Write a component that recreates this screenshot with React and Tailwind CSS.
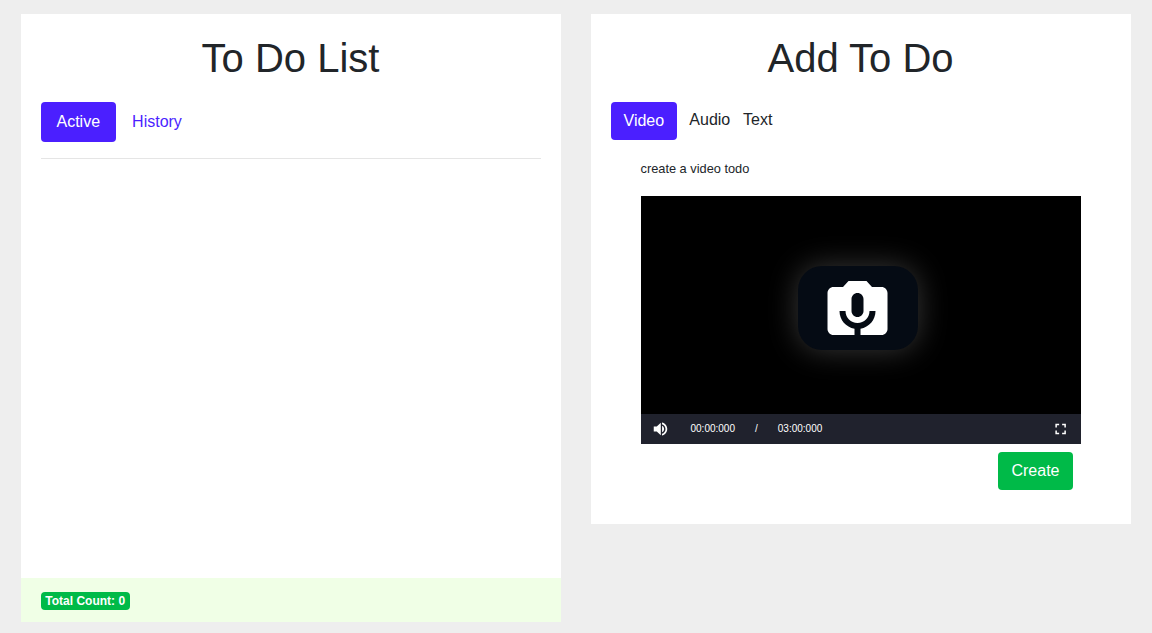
function CameraMicIcon({ className }) {
  return (
    <svg viewBox="-0.17 0 24 24" fill="currentColor" className={className}>
      <path d="M20 5h-3.17L15 3H9L7.17 5H4c-1.1 0-2 .9-2 2v12c0 1.1.9 2 2 2h7v-2.09c-2.83-.48-5-2.94-5-5.91h2c0 2.21 1.79 4 4 4s4-1.79 4-4h2c0 2.97-2.17 5.43-5 5.91V21h7c1.1 0 2-.9 2-2V7c0-1.1-.9-2-2-2zm-6 8c0 1.1-.9 2-2 2s-2-.9-2-2V9c0-1.1.9-2 2-2s2 .9 2 2v4z" />
    </svg>
  );
}

function VolumeIcon({ className }) {
  return (
    <svg viewBox="0.67 0 24 24" fill="currentColor" className={className}>
      <path d="M3 8.6v6.8h4l5.4 5V3.6L7 8.6H3zm13.8 3.4c0-1.9-1.1-3.6-2.7-4.4v8.8c1.6-.8 2.7-2.5 2.7-4.4zM14 3.23v2.3c2.7.86 4.7 3.4 4.7 6.47s-2 5.61-4.7 6.47v2.3c4.01-.91 7-4.49 7-8.77s-2.99-7.86-7-8.77z" />
    </svg>
  );
}

function FullscreenIcon({ className }) {
  return (
    <svg viewBox="0.5 0 24 24" fill="currentColor" className={className}>
      <path d="M7 14H5v5h5v-2H7v-3zm-2-4h2V7h3V5H5v5zm12 7h-3v2h5v-5h-2v3zM14 5v2h3v3h2V5h-5z" />
    </svg>
  );
}

function Title({ children }) {
  return <h1 className="mb-5 text-center text-[40px] leading-[48px]">{children}</h1>;
}

function TodoList() {
  return (
    <section className="flex h-[608px] w-[540px] flex-col bg-white">
      <div className="flex-1 p-5">
        <Title>To Do List</Title>
        <nav className="flex">
          <button className="rounded bg-[#4b1fff] px-4 py-2 text-white">Active</button>
          <button className="px-4 py-2 text-[#4b1fff]">History</button>
        </nav>
        <hr className="mt-4 border-t border-black/10" />
      </div>
      <footer className="flex h-11 items-center bg-[#f0ffe6] px-5 pt-0.5">
        <span className="h-[18px] rounded bg-[#00ba48] px-[4.8px] text-xs leading-[18px] font-bold text-white">
          Total Count: 0
        </span>
      </footer>
    </section>
  );
}

function VideoRecorder() {
  return (
    <div className="flex h-[248px] flex-col bg-black text-white">
      <div className="flex flex-1 items-start justify-center pt-[70px] pr-[6px]">
        <button className="flex h-[84px] w-[120px] items-center justify-center rounded-3xl bg-[#050b14] pr-px shadow-[0_0_30px_rgba(255,255,255,0.22)]">
          <CameraMicIcon className="size-[72px]" />
        </button>
      </div>
      <div className="flex h-[30px] items-center bg-[#20222d] px-[11px] text-[10px] leading-[30px]">
        <VolumeIcon className="size-[18px]" />
        <span className="ml-[21px]">00:00:000</span>
        <span className="ml-5">/</span>
        <span className="ml-5">03:00:000</span>
        <FullscreenIcon className="ml-auto size-[18px]" />
      </div>
    </div>
  );
}

function AddTodo() {
  return (
    <section className="h-[510px] w-[540px] bg-white p-5">
      <Title>Add To Do</Title>
      <nav className="flex items-start">
        <button className="h-[38px] rounded bg-[#4b1fff] px-[13px] text-white">Video</button>
        <button className="ml-[12.2px] pt-[6px]">Audio</button>
        <button className="ml-[12.8px] pt-[6px]">Text</button>
      </nav>
      <div className="px-[30px] pt-[19px]">
        <p className="mb-[17px] text-[12.8px] leading-5">create a video todo</p>
        <VideoRecorder />
        <div className="flex justify-end pt-2 pr-2">
          <button className="h-[38px] rounded bg-[#00ba48] px-[13px] text-white">Create</button>
        </div>
      </div>
    </section>
  );
}

export default function App() {
  return (
    <main className="flex h-screen items-start gap-[30px] overflow-hidden bg-[#eeeeee] pt-[14px] pl-[20.5px] font-['Liberation_Sans',Arial,sans-serif] text-base text-[#212529]">
      <TodoList />
      <AddTodo />
    </main>
  );
}
